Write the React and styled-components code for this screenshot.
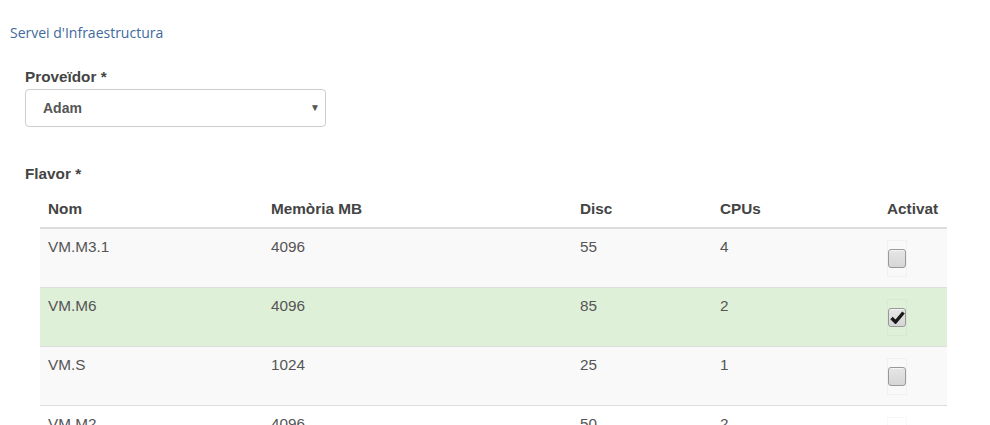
import React from "react";
import styled, { createGlobalStyle } from "styled-components";

const Global = createGlobalStyle`
  html, body { margin: 0; padding: 0; background: #fff; }
  body { font-family: "Liberation Sans", Arial, sans-serif; font-size: 15.3px; line-height: 20px; color: #555; overflow: hidden; }
`;

const Page = styled.div`
  padding: 23px 10px 0 10px;
  width: 990px;
  box-sizing: border-box;
`;

const Crumb = styled.a`
  display: block;
  font-family: "Open Sans", sans-serif;
  font-size: 14px;
  line-height: 20px;
  color: #40699c;
  text-decoration: none;
`;

const Form = styled.div`
  padding: 24px 0 0 15px;
  display: flex;
  flex-direction: column;
`;

const Group = styled.div`
  display: flex;
  flex-direction: column;
  margin-bottom: ${(p) => p.$mb || 0}px;
`;

const Label = styled.label`
  font-weight: bold;
  font-size: 15.3px;
  line-height: 20px;
  color: #444;
  margin-bottom: ${(p) => p.$mb || 0}px;
`;

const SelectBox = styled.div`
  width: 301px;
  height: 38px;
  box-sizing: border-box;
  border: 1px solid #ccc;
  border-radius: 4px;
  display: flex;
  align-items: center;
  justify-content: space-between;
  padding: 0 5px 0 17px;
  color: #555;
  font-weight: bold;
  font-size: 14px;
`;

const Caret = styled.span`
  font-size: 10px;
  color: #555;
`;

const Table = styled.table`
  margin-left: 15px;
  width: 907px;
  border-collapse: collapse;
  border-spacing: 0;
`;

const Th = styled.th`
  text-align: left;
  padding: 8px;
  font-weight: bold;
  color: #444;
  border-bottom: 2px solid #ddd;
  line-height: 20px;
  width: ${(p) => p.$w}px;
`;

const Tr = styled.tr`
  background: ${(p) => (p.$success ? "#dff0d8" : p.$striped ? "#f9f9f9" : "#fff")};
  height: 59px;
`;

const Td = styled.td`
  padding: 8px;
  vertical-align: top;
  border-top: 1px solid #ddd;
  color: #555;
  line-height: 20px;
`;

const CheckWrap = styled.div`
  width: 20px;
  height: 37px;
  margin-top: 3px;
  box-sizing: border-box;
  border: 1px solid rgba(0,0,0,0.03);
  display: flex;
  align-items: center;
  justify-content: center;
`;

const Check = styled.div`
  width: 19px;
  height: 19px;
  box-sizing: border-box;
  border: 1px solid #999;
  border-radius: 3px;
  background: linear-gradient(#e6e6e6, #d6d6d6);
  box-shadow: inset 0 1px 0 rgba(255,255,255,0.6);
  display: flex;
  align-items: center;
  justify-content: center;
`;

const rows = [
  { n: "VM.M3.1", m: "4096", d: "55", c: "4", on: false },
  { n: "VM.M6", m: "4096", d: "85", c: "2", on: true },
  { n: "VM.S", m: "1024", d: "25", c: "1", on: false },
  { n: "VM.M2", m: "4096", d: "50", c: "2", on: false },
];

export default function App() {
  return (
    <>
      <Global />
      <Page>
        <Crumb href="#">Servei d'Infraestructura</Crumb>
        <Form>
          <Group $mb={37}>
            <Label $mb={2}>Proveïdor *</Label>
            <SelectBox>
              <span>Adam</span>
              <Caret>▼</Caret>
            </SelectBox>
          </Group>
          <Group>
            <Label $mb={7}>Flavor *</Label>
            <Table>
              <thead>
                <tr>
                  <Th $w={207}>Nom</Th>
                  <Th $w={293}>Memòria MB</Th>
                  <Th $w={124}>Disc</Th>
                  <Th $w={151}>CPUs</Th>
                  <Th>Activat</Th>
                </tr>
              </thead>
              <tbody>
                {rows.map((r, i) => (
                  <Tr key={r.n} $success={r.on} $striped={i % 2 === 0}>
                    <Td>{r.n}</Td>
                    <Td>{r.m}</Td>
                    <Td>{r.d}</Td>
                    <Td>{r.c}</Td>
                    <Td>
                      <CheckWrap>
                        <Check>
                          {r.on && (
                            <svg width="15" height="13" viewBox="0 0 15 13">
                              <path d="M1.5 7 L5.5 11 L13.5 1.5" fill="none" stroke="#1a1a1a" strokeWidth="3.4" strokeLinejoin="miter" />
                            </svg>
                          )}
                        </Check>
                      </CheckWrap>
                    </Td>
                  </Tr>
                ))}
              </tbody>
            </Table>
          </Group>
        </Form>
      </Page>
    </>
  );
}
